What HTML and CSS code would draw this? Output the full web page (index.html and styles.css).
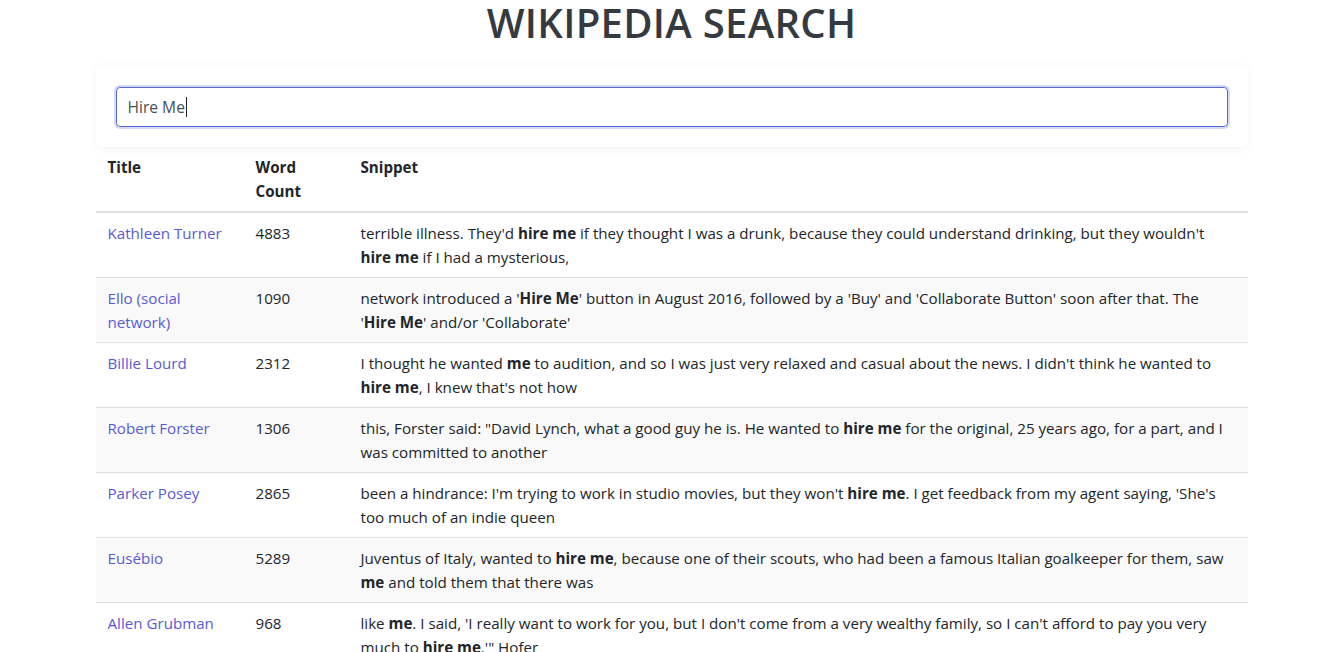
FILE: index.html
```html
<!DOCTYPE html>
<html lang="en">
<head>
<meta charset="utf-8">
<title>Wikipedia Search</title>
<link rel="stylesheet" href="styles.css">
</head>
<body>
<div class="container">
  <h1 class="page-title">WIKIPEDIA SEARCH</h1>
  <div class="search-card">
    <div class="search-input"><span>Hire Me</span><span class="caret"></span></div>
  </div>
  <table class="results">
    <thead>
      <tr>
        <th class="col-title">Title</th>
        <th class="col-count">Word Count</th>
        <th class="col-snippet">Snippet</th>
      </tr>
    </thead>
    <tbody>
      <tr>
        <td><a href="#">Kathleen Turner</a></td>
        <td>4883</td>
        <td>terrible illness. They'd <b>hire me</b> if they thought I was a drunk, because they could understand drinking, but they wouldn't <b>hire me</b> if I had a mysterious,</td>
      </tr>
      <tr>
        <td><a href="#">Ello (social network)</a></td>
        <td>1090</td>
        <td>network introduced a '<b>Hire Me</b>' button in August 2016, followed by a 'Buy' and 'Collaborate Button' soon after that. The '<b>Hire Me</b>' and/or 'Collaborate'</td>
      </tr>
      <tr>
        <td><a href="#">Billie Lourd</a></td>
        <td>2312</td>
        <td>I thought he wanted <b>me</b> to audition, and so I was just very relaxed and casual about the news. I didn't think he wanted to <b>hire me</b>, I knew that's not how</td>
      </tr>
      <tr>
        <td><a href="#">Robert Forster</a></td>
        <td>1306</td>
        <td>this, Forster said: "David Lynch, what a good guy he is. He wanted to <b>hire me</b> for the original, 25 years ago, for a part, and I was committed to another</td>
      </tr>
      <tr>
        <td><a href="#">Parker Posey</a></td>
        <td>2865</td>
        <td>been a hindrance: I'm trying to work in studio movies, but they won't <b>hire me</b>. I get feedback from my agent saying, 'She's too much of an indie queen</td>
      </tr>
      <tr>
        <td><a href="#">Eusébio</a></td>
        <td>5289</td>
        <td>Juventus of Italy, wanted to <b>hire me</b>, because one of their scouts, who had been a famous Italian goalkeeper for them, saw <b>me</b> and told them that there was</td>
      </tr>
      <tr>
        <td><a href="#">Allen Grubman</a></td>
        <td>968</td>
        <td>like <b>me</b>. I said, 'I really want to work for you, but I don't come from a very wealthy family, so I can't afford to pay you very much to <b>hire me</b>.'" Hofer</td>
      </tr>
    </tbody>
  </table>
</div>
</body>
</html>
```
FILE: styles.css
```css
* { box-sizing: border-box; }
html, body { margin: 0; padding: 0; background: #fff; }
body {
  font-family: "Open Sans", "Noto Sans", sans-serif;
  font-size: 15.15px;
  line-height: 24px;
  color: #212529;
}
.container {
  width: 1152px;
  margin: 0 auto;
}
.page-title {
  margin: 0;
  height: 67px;
  text-align: center;
  font-size: 40px;
  line-height: 46px;
  font-weight: 600;
  color: #343a40;
  letter-spacing: 0.3px;
}
.search-card {
  background: #fff;
  border-radius: 6px;
  padding: 20px;
  box-shadow: 0 1px 10px rgba(0, 0, 0, 0.06);
}
.search-input {
  height: 40px;
  border: 1px solid #5468dc;
  border-radius: 4px;
  box-shadow: 0 0 0 2px rgba(84, 104, 220, 0.25);
  padding: 0 11px;
  display: flex;
  align-items: center;
  font-size: 15.6px;
  color: #495057;
}
.caret {
  display: inline-block;
  width: 1px;
  height: 20px;
  background: #222;
  margin-left: 1px;
}
.results {
  width: 100%;
  border-collapse: collapse;
}
.results th {
  text-align: left;
  vertical-align: top;
  font-weight: 700;
  padding: 8px 12px;
  border-bottom: 2px solid #dee2e6;
}
.col-title { width: 148px; }
.col-count { width: 105px; }
.results td {
  vertical-align: top;
  padding: 8px 12px;
  border-bottom: 1px solid #dee2e6;
}
.results tbody tr:nth-child(even) td { background: #f9f9f9; }
.results a {
  color: #5a5ad6;
  text-decoration: none;
}
.results b { font-weight: 700; }
```
